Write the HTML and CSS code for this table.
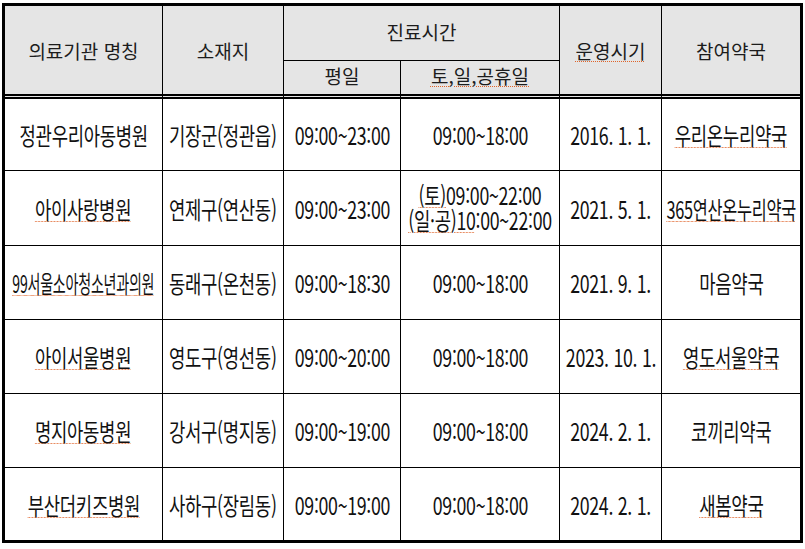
FILE: index.html
```html
<!DOCTYPE html>
<html lang="ko">
<head>
<meta charset="utf-8">
<link rel="stylesheet" href="styles.css">
</head>
<body>
<div class="sheet">
  <div class="cell head span-rows">의료기관 명칭</div>
  <div class="cell head span-rows">소재지</div>
  <div class="cell head span-cols top">진료시간</div>
  <div class="cell head span-rows"><span class="sp">운영시기</span></div>
  <div class="cell head span-rows last-col">참여약국</div>
  <div class="cell head sub">평일</div>
  <div class="cell head sub"><span class="sp">토,일,공휴일</span></div>

  <div class="cell"><span class="t">정관우리아동병원</span></div>
  <div class="cell"><span class="t">기장군(정관읍)</span></div>
  <div class="cell"><span class="t">09:00~23:00</span></div>
  <div class="cell"><span class="t">09:00~18:00</span></div>
  <div class="cell"><span class="t">2016. 1. 1.</span></div>
  <div class="cell last-col"><span class="t"><span class="sp">우리온누리약국</span></span></div>

  <div class="cell"><span class="t"><span class="sp">아이사랑병원</span></span></div>
  <div class="cell"><span class="t">연제구(연산동)</span></div>
  <div class="cell"><span class="t">09:00~23:00</span></div>
  <div class="cell col"><span class="t"><span class="sp">(토)</span>09:00~22:00</span><span class="t"><span class="sp">(일·공)10</span>:00~22:00</span></div>
  <div class="cell"><span class="t">2021. 5. 1.</span></div>
  <div class="cell last-col"><span class="t tight"><span class="sp">365연산온누리약국</span></span></div>

  <div class="cell"><span class="t narrow"><span class="sp">99서울소아청소년과의원</span></span></div>
  <div class="cell"><span class="t">동래구(온천동)</span></div>
  <div class="cell"><span class="t">09:00~18:30</span></div>
  <div class="cell"><span class="t">09:00~18:00</span></div>
  <div class="cell"><span class="t">2021. 9. 1.</span></div>
  <div class="cell last-col"><span class="t">마음약국</span></div>

  <div class="cell"><span class="t"><span class="sp">아이서울병원</span></span></div>
  <div class="cell"><span class="t">영도구(영선동)</span></div>
  <div class="cell"><span class="t">09:00~20:00</span></div>
  <div class="cell"><span class="t">09:00~18:00</span></div>
  <div class="cell"><span class="t">2023. 10. 1.</span></div>
  <div class="cell last-col"><span class="t"><span class="sp">영도서울약국</span></span></div>

  <div class="cell"><span class="t"><span class="sp">명지아동병원</span></span></div>
  <div class="cell"><span class="t">강서구(명지동)</span></div>
  <div class="cell"><span class="t">09:00~19:00</span></div>
  <div class="cell"><span class="t">09:00~18:00</span></div>
  <div class="cell"><span class="t">2024. 2. 1.</span></div>
  <div class="cell last-col"><span class="t">코끼리약국</span></div>

  <div class="cell last-row"><span class="t"><span class="sp">부산더키즈병원</span></span></div>
  <div class="cell last-row"><span class="t">사하구(장림동)</span></div>
  <div class="cell last-row"><span class="t">09:00~19:00</span></div>
  <div class="cell last-row"><span class="t">09:00~18:00</span></div>
  <div class="cell last-row"><span class="t">2024. 2. 1.</span></div>
  <div class="cell last-row last-col"><span class="t"><span class="sp">새봄약국</span></span></div>
</div>
</body>
</html>
```

FILE: styles.css
```css
html, body {
  margin: 0;
  padding: 0;
  background: #fff;
}

body {
  font-family: "Noto Sans CJK KR", "Noto Sans", sans-serif;
  color: #111;
}

.sheet {
  display: grid;
  grid-template-columns: 158px 121px 117px 159px 102px 138px;
  grid-template-rows: 55px 38px 72px 75px 74px 74px 74px 72px;
  width: max-content;
  border: 3px solid #000;
  margin: 3px 0 0 2px;
}

.cell {
  box-sizing: border-box;
  display: flex;
  align-items: center;
  justify-content: center;
  text-align: center;
  border-right: 1px solid #000;
  border-bottom: 1px solid #000;
  white-space: nowrap;
  overflow: visible;
}

.col {
  flex-direction: column;
  padding-bottom: 2px;
}

.last-col { border-right: none; }
.last-row { border-bottom: none; }

.head {
  background: #e5e5e5;
  font-size: 19px;
  line-height: 1;
  color: #1c1c1c;
}

.span-rows {
  grid-row: span 2;
  border-bottom: 5px double #000;
}

.span-cols {
  grid-column: span 2;
}

.top { padding-bottom: 4px; }

.sub {
  border-bottom: 5px double #000;
  padding-bottom: 4px;
}

.t {
  display: inline-block;
  font-size: 24px;
  line-height: 25px;
  height: 25px;
  transform: scaleX(0.74);
  letter-spacing: -0.4px;
  color: #111;
}

.t.tight {
  transform: scaleX(0.68);
}

.t.narrow {
  transform: scaleX(0.585);
}

.sp {
  display: inline-block;
  line-height: inherit;
  text-decoration: underline dotted #e0642a;
  text-decoration-thickness: 1px;
  text-underline-offset: 2px;
}

.head .sp {
  line-height: 1;
}
```
